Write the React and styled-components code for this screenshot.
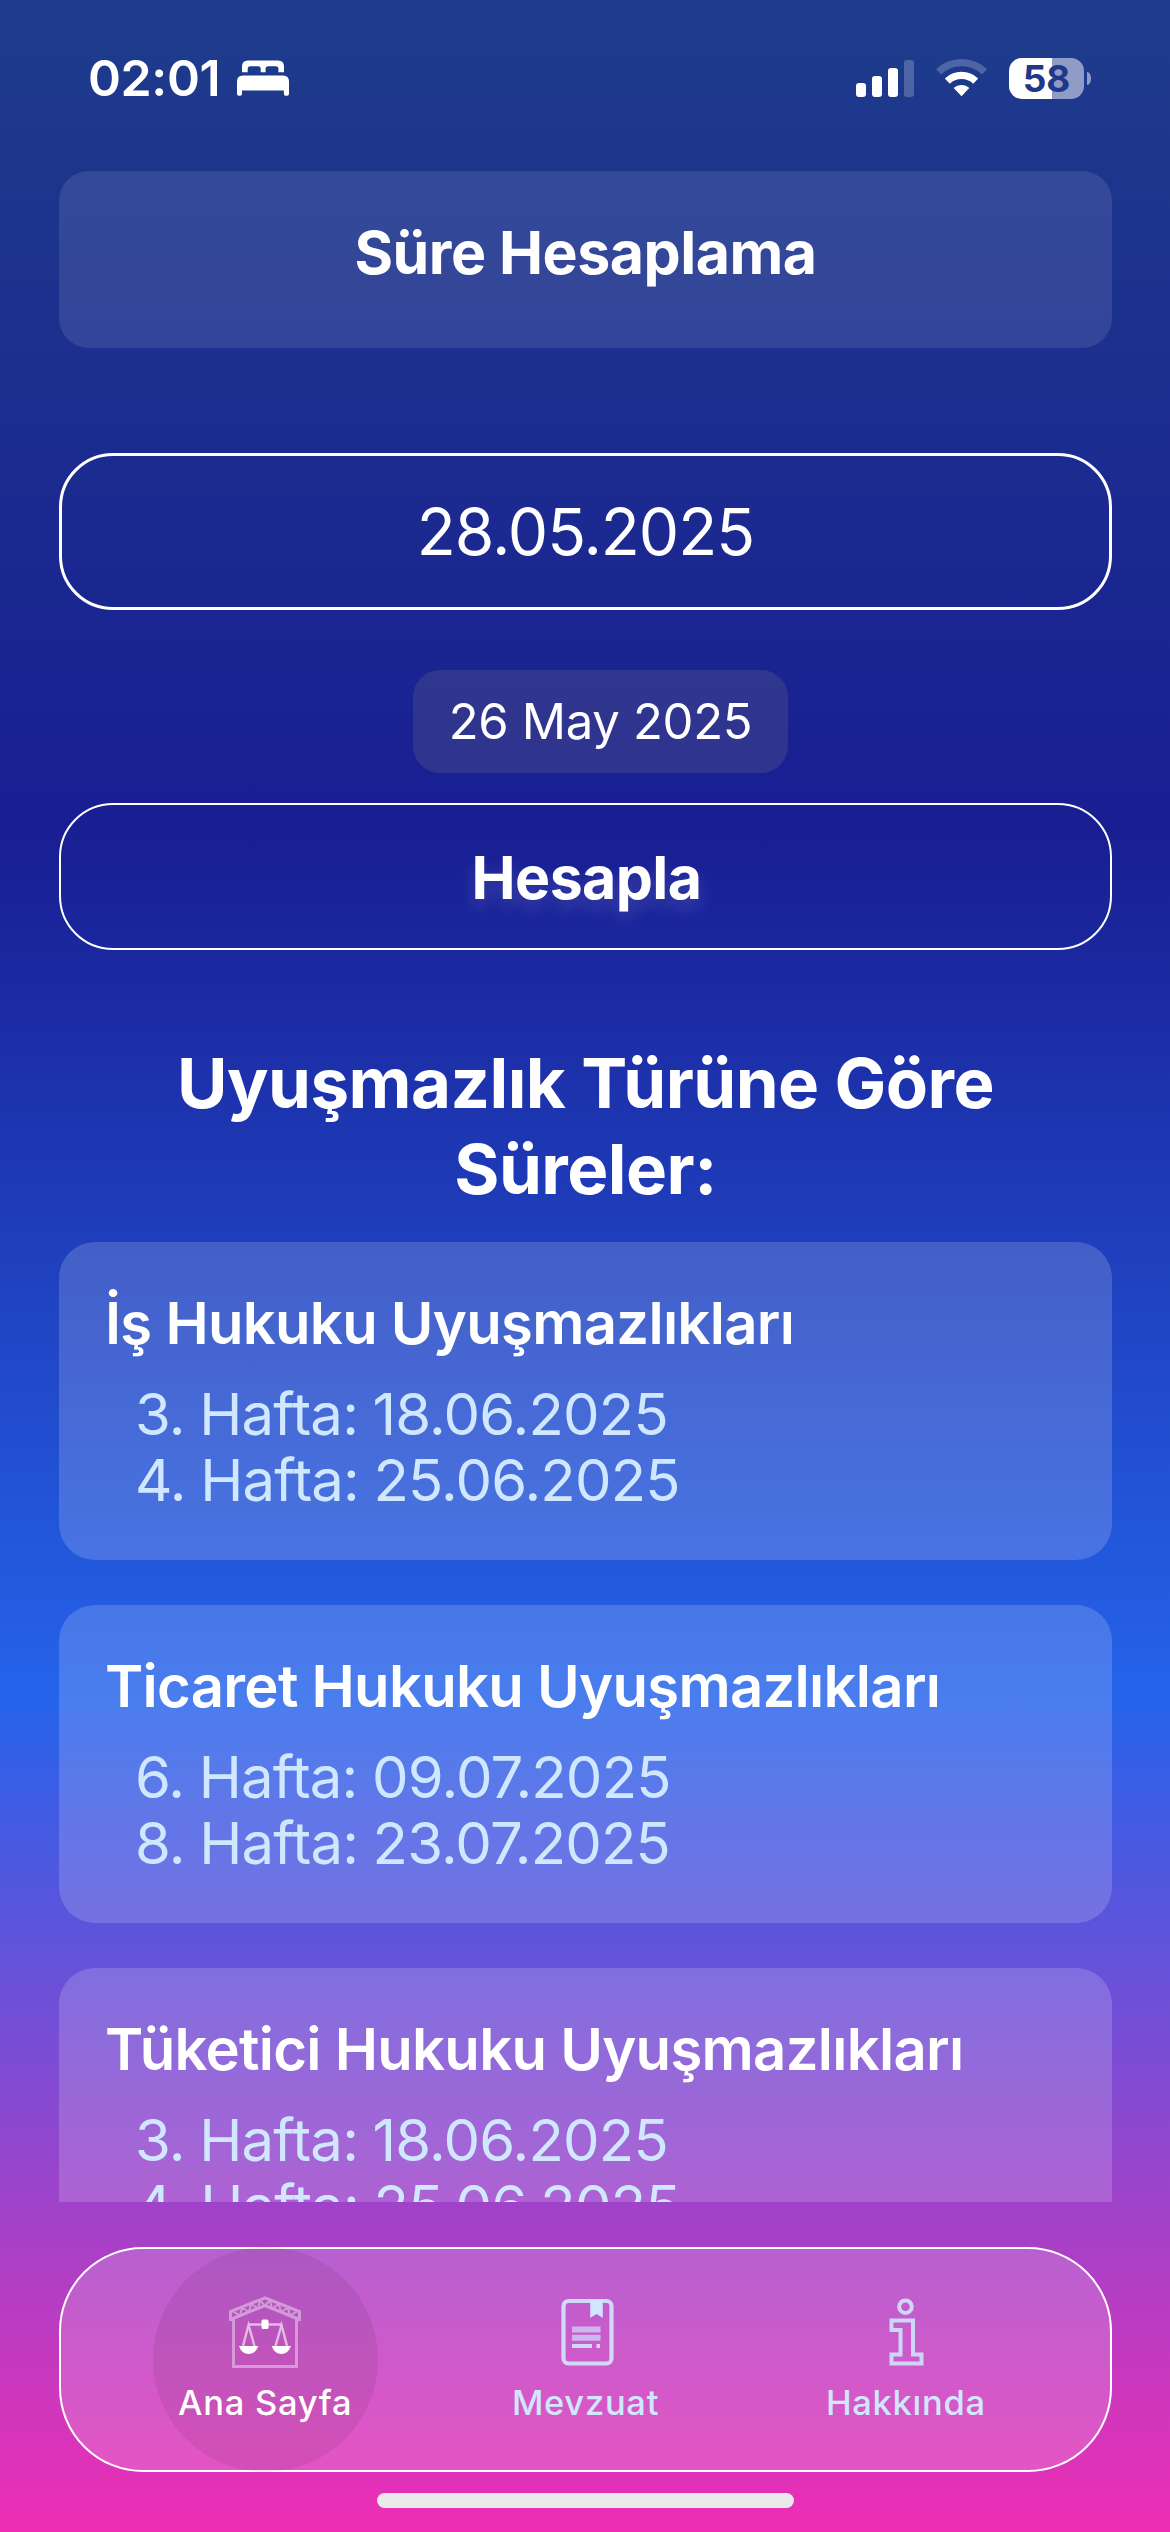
import React from 'react';
import styled, { createGlobalStyle } from 'styled-components';

const GlobalStyle = createGlobalStyle`
  * { box-sizing: border-box; }
  body { margin: 0; }
  h1, h2, h3, p, ul { margin: 0; padding: 0; }
  button { font: inherit; color: inherit; background: none; padding: 0; }
`;

const ICE = '#cfe8ff';

const Screen = styled.div`
  width: 1170px;
  height: 2532px;
  display: flex;
  flex-direction: column;
  overflow: hidden;
  color: #fff;
  font-family: Inter, 'Liberation Sans', sans-serif;
  background: linear-gradient(180deg, #1e3c8b 0%, #191e93 33%, #2563eb 67%, #ee2eb4 100%);
`;

const StatusBar = styled.header`
  height: 156px;
  margin-bottom: 15px;
  padding: 0 79px 0 88px;
  display: flex;
  align-items: center;
  justify-content: space-between;
`;

const StatusGroup = styled.div`
  display: flex;
  align-items: center;
  gap: ${(p) => p.$gap}px;
`;

const Clock = styled.span`
  font-size: 50px;
  font-weight: 600;
  letter-spacing: -0.4px;
  line-height: 60px;
`;

const Battery = styled.div`
  display: flex;
  align-items: center;
  gap: 3px;
`;

const BatteryBody = styled.div`
  width: 75px;
  height: 41px;
  border-radius: 13px;
  display: flex;
  align-items: center;
  justify-content: center;
  background: linear-gradient(
    90deg,
    #fff ${(p) => p.$level}%,
    rgba(255, 255, 255, 0.5) ${(p) => p.$level}%
  );
  color: #1e388a;
  font-size: 37px;
  font-weight: 700;
  line-height: 41px;
`;

const BatteryTip = styled.div`
  width: 4px;
  height: 13px;
  border-radius: 0 4px 4px 0 / 0 6px 6px 0;
  background: rgba(255, 255, 255, 0.5);
`;

const Content = styled.main`
  height: 2031px;
  padding: 0 58px 0 59px;
  display: flex;
  flex-direction: column;
  overflow: hidden;
`;

const TitleCard = styled.div`
  flex: none;
  height: 177px;
  padding-top: 52px;
  border-radius: 30px;
  background: rgba(255, 255, 255, 0.1);
  text-align: center;
`;

const Title = styled.h1`
  font-size: 59px;
  font-weight: 700;
  letter-spacing: -0.5px;
  line-height: 60px;
`;

const DateField = styled.div`
  flex: none;
  height: 157px;
  margin-top: 105px;
  display: flex;
  align-items: center;
  justify-content: center;
  border: 3px solid #fff;
  border-radius: 54px;
  font-size: 64px;
  letter-spacing: -1px;
`;

const DatePill = styled.div`
  flex: none;
  align-self: center;
  width: 375px;
  height: 103px;
  margin: 60px 0 30px 30px;
  display: flex;
  align-items: center;
  justify-content: center;
  border-radius: 27px;
  background: rgba(118, 118, 128, 0.24);
  font-size: 49px;
  letter-spacing: -0.3px;
`;

const CalcButton = styled.button`
  flex: none;
  height: 147px;
  padding: 2px 0 0 2px;
  border: 2px solid #fff;
  border-radius: 54px;
  font-size: 59px;
  font-weight: 700;
  letter-spacing: -0.6px;
  text-shadow: 0 9px 16px rgba(255, 255, 255, 0.14);
`;

const Heading = styled.h2`
  flex: none;
  margin: 90px 90px 30px;
  font-size: 69px;
  font-weight: 700;
  letter-spacing: -0.52px;
  line-height: 86px;
  text-align: center;
`;

const CardList = styled.div`
  display: flex;
  flex-direction: column;
  gap: 45px;
`;

const Card = styled.section`
  flex: none;
  height: 318px;
  padding: 45px 46px;
  border-radius: 36px;
  background: rgba(255, 255, 255, 0.17);
`;

const CardTitle = styled.h3`
  margin-bottom: 21px;
  font-size: 58px;
  font-weight: 600;
  letter-spacing: -0.71px;
  line-height: 73px;
  white-space: nowrap;
`;

const WeekList = styled.ul`
  list-style: none;
  padding-left: 30px;
`;

const Week = styled.li`
  color: ${ICE};
  font-size: 58px;
  letter-spacing: -0.8px;
  word-spacing: -1px;
  line-height: 66px;
`;

const TabBar = styled.nav`
  flex: none;
  height: 225px;
  margin: 45px 58px 0 59px;
  padding: 0 44px;
  display: flex;
  align-items: center;
  justify-content: space-around;
  border: 2px solid #fff;
  border-radius: 84px;
  background: rgba(255, 255, 255, 0.17);
`;

const Tab = styled.button`
  flex: none;
  width: 225px;
  height: 225px;
  display: flex;
  flex-direction: column;
  align-items: center;
  padding-top: 49px;
  border: 0;
  border-radius: 50%;
  background: ${(p) => (p.$active ? 'rgba(0, 0, 0, 0.065)' : 'transparent')};
  color: ${(p) => (p.$active ? '#fff' : ICE)};
  font-size: 34.5px;
  font-weight: 500;
  letter-spacing: 0.7px;

  svg {
    filter: blur(0.7px);
  }

  span {
    margin-top: 14px;
    line-height: 41px;
  }
`;

const HomeIndicator = styled.div`
  flex: none;
  align-self: center;
  width: 417px;
  height: 15px;
  margin-top: 21px;
  border-radius: 8px;
  background: #e9e9e9;
`;

const BedIcon = () => (
  <svg width="52" height="36" viewBox="0 0 52 36" fill="#fff">
    <path d="M5 12.2V6.5Q5 .5 11 .5h30Q47 .5 47 6.5v5.7h-5.6V8.8q0-2.6-2.6-2.6h-7.6q-2.6 0-2.6 2.6v3.4h-4.9V8.8q0-2.6-2.6-2.6h-7.8q-2.6 0-2.6 2.6v3.4z" />
    <path d="M0 21.5q0-6 6-6h40q6 0 6 6V34q0 1.8-1.8 1.8h-1.6q-1.7 0-1.7-1.8v-3.4H5V34q0 1.8-1.7 1.8H1.8Q0 35.800 0 34z" />
  </svg>
);

const SignalIcon = () => (
  <svg width="58" height="37" viewBox="0 0 58 37" fill="#fff">
    <rect x="0" y="23" width="10" height="14" rx="3" />
    <rect x="16" y="16" width="10" height="21" rx="3" />
    <rect x="32" y="8" width="10" height="29" rx="3" />
    <rect x="48" y="0" width="10" height="37" rx="3" opacity=".22" />
  </svg>
);

const WifiIcon = () => (
  <svg width="51" height="38" viewBox="0 0 51 38" fill="none" stroke="#fff" strokeWidth="7.3">
    <path d="M2.500 12.900a33.400 33.400 0 0 1 46 0" opacity=".22" />
    <path d="M11.300 22.100a20.700 20.700 0 0 1 28.400 0" />
    <path d="M25.500 37.300L17.700 29a11.300 11.300 0 0 1 15.600 0z" fill="#fff" stroke="none" />
  </svg>
);

const CourtIcon = () => (
  <svg width="72" height="72" viewBox="0 0 72 72" fill="none" stroke="currentColor">
    <g strokeWidth="3" opacity=".4">
      <path d="M4.500 23V70.500H67.500V23" />
      <path d="M1.500 25V15.500L36 1.800L70.500 15.500V25" />
      <path d="M1.500 23.500L36 9.500L70.500 23.500" />
      <path d="M4 15.500l7 4 2-8 7 4.500 2-8 7 4.500 2-8 5 5 5-5 2 8 7-4.500 2 8 7-4.500 2 8 7-4" strokeWidth="2" />
    </g>
    <g strokeWidth="2.400" opacity=".6">
      <path d="M19.500 28.500H52.500" />
      <path d="M14 50L19.500 29L25.500 50M46.500 50L52.500 29L58 50" />
    </g>
    <g fill="currentColor" stroke="none">
      <rect x="32.500" y="23.500" width="7" height="9.500" rx="1.500" />
      <path d="M10 50H29.300Q26.500 58 19.600 58T10 50zM42.700 50H62Q59 58 52.300 58T42.700 50z" />
    </g>
  </svg>
);

const DocumentIcon = () => (
  <svg width="72" height="72" viewBox="0 0 72 72" fill="none" stroke="currentColor">
    <rect x="14.500" y="5" width="48" height="62.500" rx="5" strokeWidth="4.200" opacity=".9" />
    <path d="M42 5H53V20.500L47.500 17L42 20.500z" fill="currentColor" stroke="currentColor" strokeWidth="1.500" />
    <path d="M23 33.500H51.500M23 41.800H51.500" strokeWidth="6" opacity=".65" />
    <path d="M23 50H43M47.500 50H51" strokeWidth="4" opacity=".9" />
  </svg>
);

const InfoIcon = () => (
  <svg width="72" height="72" viewBox="0 0 72 72" fill="none" stroke="currentColor" strokeWidth="4" opacity=".88">
    <circle cx="35.500" cy="10.700" r="6.300" />
    <path d="M21.500 24.500H43V58.500H51.500V67.500H21.500V58.500H30.500V34H21.500z" />
  </svg>
);

const cards = [
  { title: 'İş Hukuku Uyuşmazlıkları', weeks: ['3. Hafta: 18.06.2025', '4. Hafta: 25.06.2025'] },
  { title: 'Ticaret Hukuku Uyuşmazlıkları', weeks: ['6. Hafta: 09.07.2025', '8. Hafta: 23.07.2025'] },
  { title: 'Tüketici Hukuku Uyuşmazlıkları', weeks: ['3. Hafta: 18.06.2025', '4. Hafta: 25.06.2025'] },
];

const tabs = [
  { label: 'Ana Sayfa', Icon: CourtIcon, active: true },
  { label: 'Mevzuat', Icon: DocumentIcon },
  { label: 'Hakkında', Icon: InfoIcon },
];

export default function App() {
  return (
    <>
      <GlobalStyle />
      <Screen>
        <StatusBar>
          <StatusGroup $gap={17}>
            <Clock>02:01</Clock>
            <BedIcon />
          </StatusGroup>
          <StatusGroup $gap={22}>
            <SignalIcon />
            <WifiIcon />
            <Battery>
              <BatteryBody $level={57.3}>58</BatteryBody>
              <BatteryTip />
            </Battery>
          </StatusGroup>
        </StatusBar>

        <Content>
          <TitleCard>
            <Title>Süre Hesaplama</Title>
          </TitleCard>
          <DateField>28.05.2025</DateField>
          <DatePill>26 May 2025</DatePill>
          <CalcButton>Hesapla</CalcButton>
          <Heading>Uyuşmazlık Türüne Göre Süreler:</Heading>
          <CardList>
            {cards.map((card) => (
              <Card key={card.title}>
                <CardTitle>{card.title}</CardTitle>
                <WeekList>
                  {card.weeks.map((week) => (
                    <Week key={week}>{week}</Week>
                  ))}
                </WeekList>
              </Card>
            ))}
          </CardList>
        </Content>

        <TabBar>
          {tabs.map(({ label, Icon, active }) => (
            <Tab key={label} $active={active}>
              <Icon />
              <span>{label}</span>
            </Tab>
          ))}
        </TabBar>
        <HomeIndicator />
      </Screen>
    </>
  );
}
